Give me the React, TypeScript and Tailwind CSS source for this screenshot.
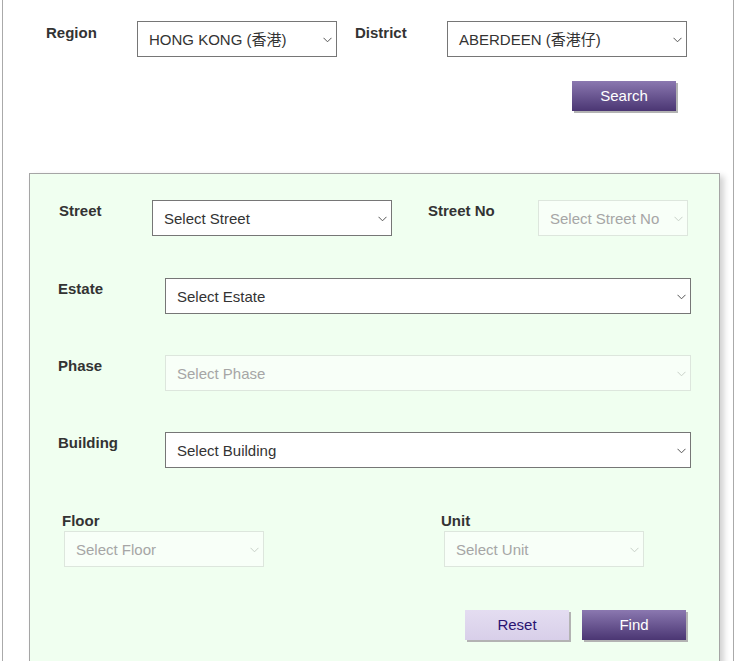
import React from "react"

function Chevron({ faded }: { faded?: boolean }) {
  return (
    <svg width="9" height="6" viewBox="0 0 9 6" className="shrink-0">
      <polyline
        points="0.5,0.8 4.5,4.8 8.5,0.8"
        fill="none"
        stroke={faded ? "#c8d0c8" : "#555"}
        strokeWidth="1"
      />
    </svg>
  )
}

function Select({ text, width, disabled }: { text: string; width: string; disabled?: boolean }) {
  return (
    <div
      className={
        "h-[36px] flex items-center justify-between pt-[2px] pl-[11px] pr-[4px] text-[15px] " +
        width +
        (disabled
          ? " border border-[#dde6dd] bg-[#f8fff8] text-[#a6a6a6]"
          : " border border-[#767676] bg-white text-[#333]")
      }
    >
      <span className="whitespace-nowrap">{text}</span>
      <Chevron faded={disabled} />
    </div>
  )
}

function Label({ text, width }: { text: string; width: string }) {
  return (
    <div className={"font-bold text-[15px] leading-[17px] text-[#333] mt-[2px] " + width}>{text}</div>
  )
}

export default function App() {
  return (
    <div className="min-h-screen mx-[2px] border-x border-[#aaa] bg-white font-['Liberation_Sans','Noto_Sans_CJK_TC',sans-serif]">
      {/* region / district */}
      <div className="pt-[21px] pl-[43px] flex items-start">
        <div className="font-bold text-[15px] leading-[17px] text-[#333] mt-[3px] w-[91px]">Region</div>
        <Select text="HONG KONG (香港)" width="w-[200px]" />
        <div className="font-bold text-[15px] leading-[17px] text-[#333] mt-[3px] ml-[18px] w-[92px]">District</div>
        <Select text="ABERDEEN (香港仔)" width="w-[240px]" />
      </div>
      <div className="mt-[24px] flex justify-end pr-[57px]">
        <button className="w-[104px] h-[30px] text-white text-[15px] bg-gradient-to-b from-[#8b78b0] to-[#4b3673] shadow-[2px_2px_0_#b3b3b3]">
          Search
        </button>
      </div>

      {/* address panel */}
      <div className="mt-[62px] ml-[26px] w-[691px] border border-[#a5a5a5] bg-[#f0fff0] pt-[26px] pb-[60px] shadow-[4px_3px_6px_rgba(0,0,0,0.18)]">
        <div className="flex items-start pl-[29px]">
          <Label text="Street" width="w-[93px]" />
          <Select text="Select Street" width="w-[240px]" />
          <Label text="Street No" width="w-[110px] ml-[36px]" />
          <Select text="Select Street No" width="w-[150px]" disabled />
        </div>

        <div className="flex items-start pl-[28px] mt-[42px]">
          <Label text="Estate" width="w-[107px]" />
          <Select text="Select Estate" width="w-[526px]" />
        </div>

        <div className="flex items-start pl-[28px] mt-[41px]">
          <Label text="Phase" width="w-[107px]" />
          <Select text="Select Phase" width="w-[526px]" disabled />
        </div>

        <div className="flex items-start pl-[28px] mt-[41px]">
          <Label text="Building" width="w-[107px]" />
          <Select text="Select Building" width="w-[526px]" />
        </div>

        <div className="flex items-start pl-[32px] mt-[44px]">
          <div className="w-[202px]">
            <div className="font-bold text-[15px] leading-[17px] text-[#333]">Floor</div>
            <div className="mt-[2px] ml-[2px]">
              <Select text="Select Floor" width="w-[200px]" disabled />
            </div>
          </div>
          <div className="ml-[177px]">
            <div className="font-bold text-[15px] leading-[17px] text-[#333]">Unit</div>
            <div className="mt-[2px] ml-[3px]">
              <Select text="Select Unit" width="w-[200px]" disabled />
            </div>
          </div>
        </div>

        <div className="mt-[43px] flex justify-end gap-[13px] pr-[33px]">
          <button className="w-[104px] h-[30px] text-[#2a1472] text-[15px] bg-gradient-to-b from-[#e4ddf1] to-[#d8cfe9] shadow-[2px_2px_0_#b3b3b3]">
            Reset
          </button>
          <button className="w-[104px] h-[30px] text-white text-[15px] bg-gradient-to-b from-[#8b78b0] to-[#4b3673] shadow-[2px_2px_0_#b3b3b3]">
            Find
          </button>
        </div>
      </div>
    </div>
  )
}
